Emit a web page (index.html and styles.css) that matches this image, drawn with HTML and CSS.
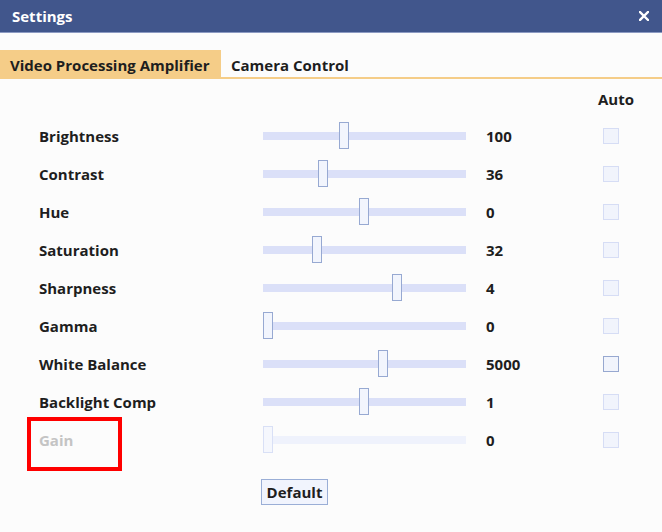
FILE: index.html
```html
<!DOCTYPE html>
<html>
<head>
<meta charset="utf-8">
<link rel="stylesheet" href="styles.css">
</head>
<body>
<div class="window">
  <div class="titlebar">
    <span class="title">Settings</span>
    <svg class="close" width="10" height="10" viewBox="0 0 10 10"><path d="M1 1 L9 9 M9 1 L1 9" stroke="#fff" stroke-width="2.4" stroke-linecap="square"/></svg>
  </div>
  <div class="tabs">
    <div class="tab active">Video Processing Amplifier</div>
    <div class="tab">Camera Control</div>
  </div>
  <div class="head"><span class="auto">Auto</span></div>
  <div class="rows">
    <div class="row"><span class="label">Brightness</span><div class="track"><div class="thumb" style="left:76px"></div></div><span class="value">100</span><span class="check"></span></div>
    <div class="row"><span class="label">Contrast</span><div class="track"><div class="thumb" style="left:55px"></div></div><span class="value">36</span><span class="check"></span></div>
    <div class="row"><span class="label">Hue</span><div class="track"><div class="thumb" style="left:96px"></div></div><span class="value">0</span><span class="check"></span></div>
    <div class="row"><span class="label">Saturation</span><div class="track"><div class="thumb" style="left:49px"></div></div><span class="value">32</span><span class="check"></span></div>
    <div class="row"><span class="label">Sharpness</span><div class="track"><div class="thumb" style="left:129px"></div></div><span class="value">4</span><span class="check"></span></div>
    <div class="row"><span class="label">Gamma</span><div class="track"><div class="thumb" style="left:0px"></div></div><span class="value">0</span><span class="check"></span></div>
    <div class="row"><span class="label">White Balance</span><div class="track"><div class="thumb" style="left:115px"></div></div><span class="value">5000</span><span class="check strong"></span></div>
    <div class="row"><span class="label">Backlight Comp</span><div class="track"><div class="thumb" style="left:96px"></div></div><span class="value">1</span><span class="check"></span></div>
    <div class="row disabled"><span class="highlight"></span><span class="label">Gain</span><div class="track"><div class="thumb" style="left:0px"></div></div><span class="value">0</span><span class="check"></span></div>
  </div>
  <div class="actions"><button class="btn">Default</button></div>
</div>
</body>
</html>
```
FILE: styles.css
```css
html, body {
  margin: 0;
  padding: 0;
  background: #fcfcfc;
}
body {
  width: 662px;
  height: 532px;
  overflow: hidden;
  font-family: "Open Sans", "Noto Sans", "Liberation Sans", sans-serif;
  font-weight: 700;
  font-size: 15px;
  color: #1e1e1e;
}
.titlebar {
  height: 32px;
  background: #41568c;
  border-bottom: 1px solid #8c9ac2;
  display: flex;
  align-items: center;
  justify-content: space-between;
  padding: 0 13px 0 12px;
  color: #fff;
}
.title {
  font-size: 15px;
  font-weight: 700;
  margin-top: -1px;
}
.close {
  display: block;
  margin-top: -1px;
}
.tabs {
  margin-top: 17px;
  height: 27px;
  border-bottom: 2px solid #f5cd88;
  display: flex;
}
.tab {
  height: 27px;
  display: flex;
  align-items: center;
  padding: 0 10px;
  font-size: 15px;
  line-height: 1;
  padding-top: 3px;
  box-sizing: border-box;
}
.tab.active {
  background: #f5cd88;
  width: 221px;
}
.head {
  height: 38px;
  display: flex;
  justify-content: flex-end;
  align-items: center;
  padding-right: 28px;
}
.auto {
  margin-top: 1px;
}
.row {
  position: relative;
  height: 38px;
  display: flex;
  align-items: center;
  padding-left: 39px;
}
.label {
  width: 224px;
}
.track {
  position: relative;
  width: 203px;
  height: 8px;
  background: #dbe0f8;
}
.thumb {
  position: absolute;
  top: -10px;
  width: 8px;
  height: 25px;
  border: 1px solid #97a9d2;
  background: #f2f5fd;
}
.value {
  margin-left: 20px;
  width: 117px;
}
.check {
  width: 14px;
  height: 14px;
  border: 1px solid #d6ddf5;
  background: #f1f4fc;
}
.check.strong {
  border-color: #97a8d0;
}
.disabled .label {
  color: #c4c4c4;
}
.disabled .track {
  background: #eff2fc;
}
.disabled .thumb {
  border-color: #d9e0f6;
  background: #f5f7fd;
}
.highlight {
  position: absolute;
  left: 27px;
  top: -4px;
  width: 87px;
  height: 46px;
  border: 4px solid #ff0000;
}
.actions {
  padding-left: 261px;
  margin-top: 20px;
}
.btn {
  width: 67px;
  height: 26px;
  margin: 0;
  padding: 0;
  border: 1px solid #9aaed6;
  background: #f1f4fd;
  font-family: inherit;
  font-weight: 700;
  font-size: 15px;
  color: #1e1e1e;
}
```
